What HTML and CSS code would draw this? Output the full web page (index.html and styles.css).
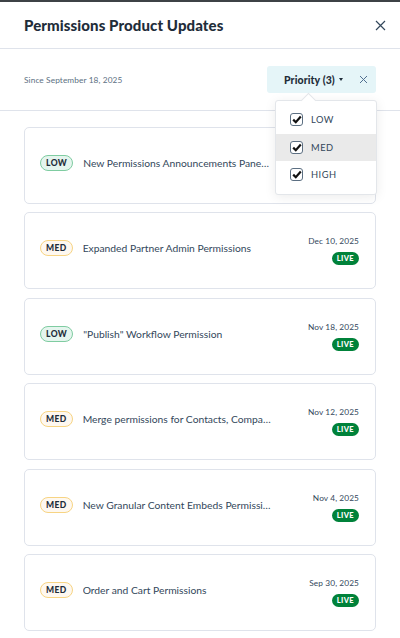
FILE: index.html
```html
<!DOCTYPE html>
<html lang="en">
<head>
<meta charset="UTF-8">
<title>Permissions Product Updates</title>
<link rel="stylesheet" href="styles.css">
</head>
<body>
  <header class="panel-header">
    <h1>Permissions Product Updates</h1>
    <button class="close" aria-label="Close">
      <svg width="11" height="11" viewBox="0 0 11 11"><path d="M1 1L10 10M10 1L1 10" stroke="#33475b" stroke-width="1.2" fill="none"/></svg>
    </button>
  </header>

  <div class="toolbar">
    <span class="since">Since September 18, 2025</span>
    <div class="filter">
      <div class="filter-btn">
        <span class="filter-label">Priority (3)</span>
        <span class="caret"></span>
        <svg class="clear" width="9" height="9" viewBox="0 0 9 9"><path d="M1 1L8 8M8 1L1 8" stroke="#516f90" stroke-width="1" fill="none"/></svg>
      </div>
      <div class="menu">
        <div class="menu-item">
          <span class="check"><svg width="10" height="9" viewBox="0 0 10 9"><path d="M1.2 4.6L3.8 7.2L8.8 1.6" stroke="#111" stroke-width="2.2" fill="none"/></svg></span>
          LOW
        </div>
        <div class="menu-item active">
          <span class="check"><svg width="10" height="9" viewBox="0 0 10 9"><path d="M1.2 4.6L3.8 7.2L8.8 1.6" stroke="#111" stroke-width="2.2" fill="none"/></svg></span>
          MED
        </div>
        <div class="menu-item">
          <span class="check"><svg width="10" height="9" viewBox="0 0 10 9"><path d="M1.2 4.6L3.8 7.2L8.8 1.6" stroke="#111" stroke-width="2.2" fill="none"/></svg></span>
          HIGH
        </div>
      </div>
    </div>
  </div>

  <main class="list">
    <div class="card">
      <span class="tag low">LOW</span>
      <span class="card-title">New Permissions Announcements Panel and Notifications</span>
      <div class="meta covered">
        <span class="date">Jan 5, 2026</span>
        <span class="live">LIVE</span>
      </div>
    </div>
    <div class="card">
      <span class="tag med">MED</span>
      <span class="card-title">Expanded Partner Admin Permissions</span>
      <div class="meta">
        <span class="date">Dec 10, 2025</span>
        <span class="live">LIVE</span>
      </div>
    </div>
    <div class="card">
      <span class="tag low">LOW</span>
      <span class="card-title">"Publish" Workflow Permission</span>
      <div class="meta">
        <span class="date">Nov 18, 2025</span>
        <span class="live">LIVE</span>
      </div>
    </div>
    <div class="card">
      <span class="tag med">MED</span>
      <span class="card-title">Merge permissions for Contacts, Companies, and Deals</span>
      <div class="meta">
        <span class="date">Nov 12, 2025</span>
        <span class="live">LIVE</span>
      </div>
    </div>
    <div class="card">
      <span class="tag med">MED</span>
      <span class="card-title">New Granular Content Embeds Permissions</span>
      <div class="meta">
        <span class="date">Nov 4, 2025</span>
        <span class="live">LIVE</span>
      </div>
    </div>
    <div class="card">
      <span class="tag med">MED</span>
      <span class="card-title">Order and Cart Permissions</span>
      <div class="meta">
        <span class="date">Sep 30, 2025</span>
        <span class="live">LIVE</span>
      </div>
    </div>
  </main>
</body>
</html>
```

FILE: styles.css
```css
body {
  margin: 0;
  font-family: Lato, "Noto Sans", sans-serif;
  color: #33475b;
  background: #fff;
  border-top: 2px solid #3e4246;
  overflow: hidden;
}
.panel-header {
  height: 46px;
  display: flex;
  align-items: center;
  justify-content: space-between;
  padding: 0 14px 0 24px;
  border-bottom: 1px solid #dfe3eb;
}
.panel-header h1 {
  margin: 0;
  font-size: 15px;
  font-weight: 900;
  color: #1f2d3a;
  letter-spacing: 0.1px;
}
.close {
  background: none;
  border: none;
  padding: 0;
  width: 11px;
  height: 11px;
  display: flex;
}
.toolbar {
  height: 61px;
  display: flex;
  align-items: center;
  justify-content: space-between;
  padding: 0 24px;
  border-bottom: 1px solid #dfe3eb;
}
.since {
  font-size: 8.3px;
  color: #5c6f82;
  margin-top: 1px;
  letter-spacing: 0.1px;
}
.filter {
  position: relative;
}
.filter-btn {
  width: 109px;
  height: 27px;
  box-sizing: border-box;
  background: #e5f5f8;
  border-radius: 3px;
  display: flex;
  align-items: center;
  padding-left: 17px;
}
.filter-label {
  font-size: 10.5px;
  font-weight: 900;
  color: #1f2d3a;
  letter-spacing: 0.1px;
}
.caret {
  width: 0;
  height: 0;
  border-left: 2.5px solid transparent;
  border-right: 2.5px solid transparent;
  border-top: 3px solid #1f2d3a;
  margin-left: 4px;
}
.clear {
  margin-left: 16px;
}
.menu {
  position: absolute;
  top: 34px;
  left: 8px;
  width: 102px;
  box-sizing: border-box;
  background: #fff;
  border: 1px solid #e3e6ea;
  border-radius: 3px;
  box-shadow: 0 2px 12px rgba(0, 0, 0, 0.08);
  padding: 5px 0 5px;
  z-index: 5;
}
.menu::before {
  content: "";
  position: absolute;
  top: -6px;
  left: 27px;
  width: 10px;
  height: 10px;
  background: #fff;
  border-left: 1px solid #e3e6ea;
  border-top: 1px solid #e3e6ea;
  transform: rotate(45deg);
}
.menu-item {
  position: relative;
  height: 27.5px;
  display: flex;
  align-items: center;
  padding-left: 14px;
  font-size: 9.3px;
  color: #33475b;
  letter-spacing: 0.5px;
}
.menu-item.active {
  background: #eaeaea;
}
.check {
  width: 13px;
  height: 13px;
  box-sizing: border-box;
  border: 1.3px solid #5c6f82;
  border-radius: 3px;
  background: #fff;
  display: flex;
  align-items: center;
  justify-content: center;
  margin-right: 8px;
}
.list {
  display: flex;
  flex-direction: column;
  gap: 8.4px;
  padding: 16px 24px;
}
.card {
  height: 77px;
  box-sizing: border-box;
  border: 1px solid #dfe3eb;
  border-radius: 5px;
  display: flex;
  align-items: center;
  padding: 0 16px 0 15px;
}
.tag {
  flex: none;
  height: 16px;
  box-sizing: border-box;
  padding: 0 5px;
  margin-bottom: 5px;
  border-radius: 8px;
  font-size: 8.5px;
  font-weight: 900;
  letter-spacing: 0.4px;
  color: #1f2d3a;
  display: flex;
  align-items: center;
}
.tag.low {
  background: #e5f5ee;
  border: 1px solid #7fcca1;
}
.tag.med {
  background: #fef8f0;
  border: 1px solid #f7d483;
}
.card-title {
  flex: 1;
  min-width: 0;
  margin-left: 10px;
  margin-bottom: 5px;
  font-size: 10.3px;
  color: #33475b;
  white-space: nowrap;
  overflow: hidden;
  text-overflow: ellipsis;
}
.meta {
  flex: none;
  width: 88px;
  display: flex;
  flex-direction: column;
  align-items: flex-end;
  gap: 6px;
}
.meta.covered {
  visibility: hidden;
}
.date {
  font-size: 8.3px;
  color: #33475b;
  letter-spacing: 0.1px;
}
.live {
  height: 13px;
  padding: 0 5px;
  border-radius: 7px;
  background: #00823a;
  color: #fff;
  font-size: 7.5px;
  font-weight: 900;
  letter-spacing: 0.4px;
  display: flex;
  align-items: center;
}
```
